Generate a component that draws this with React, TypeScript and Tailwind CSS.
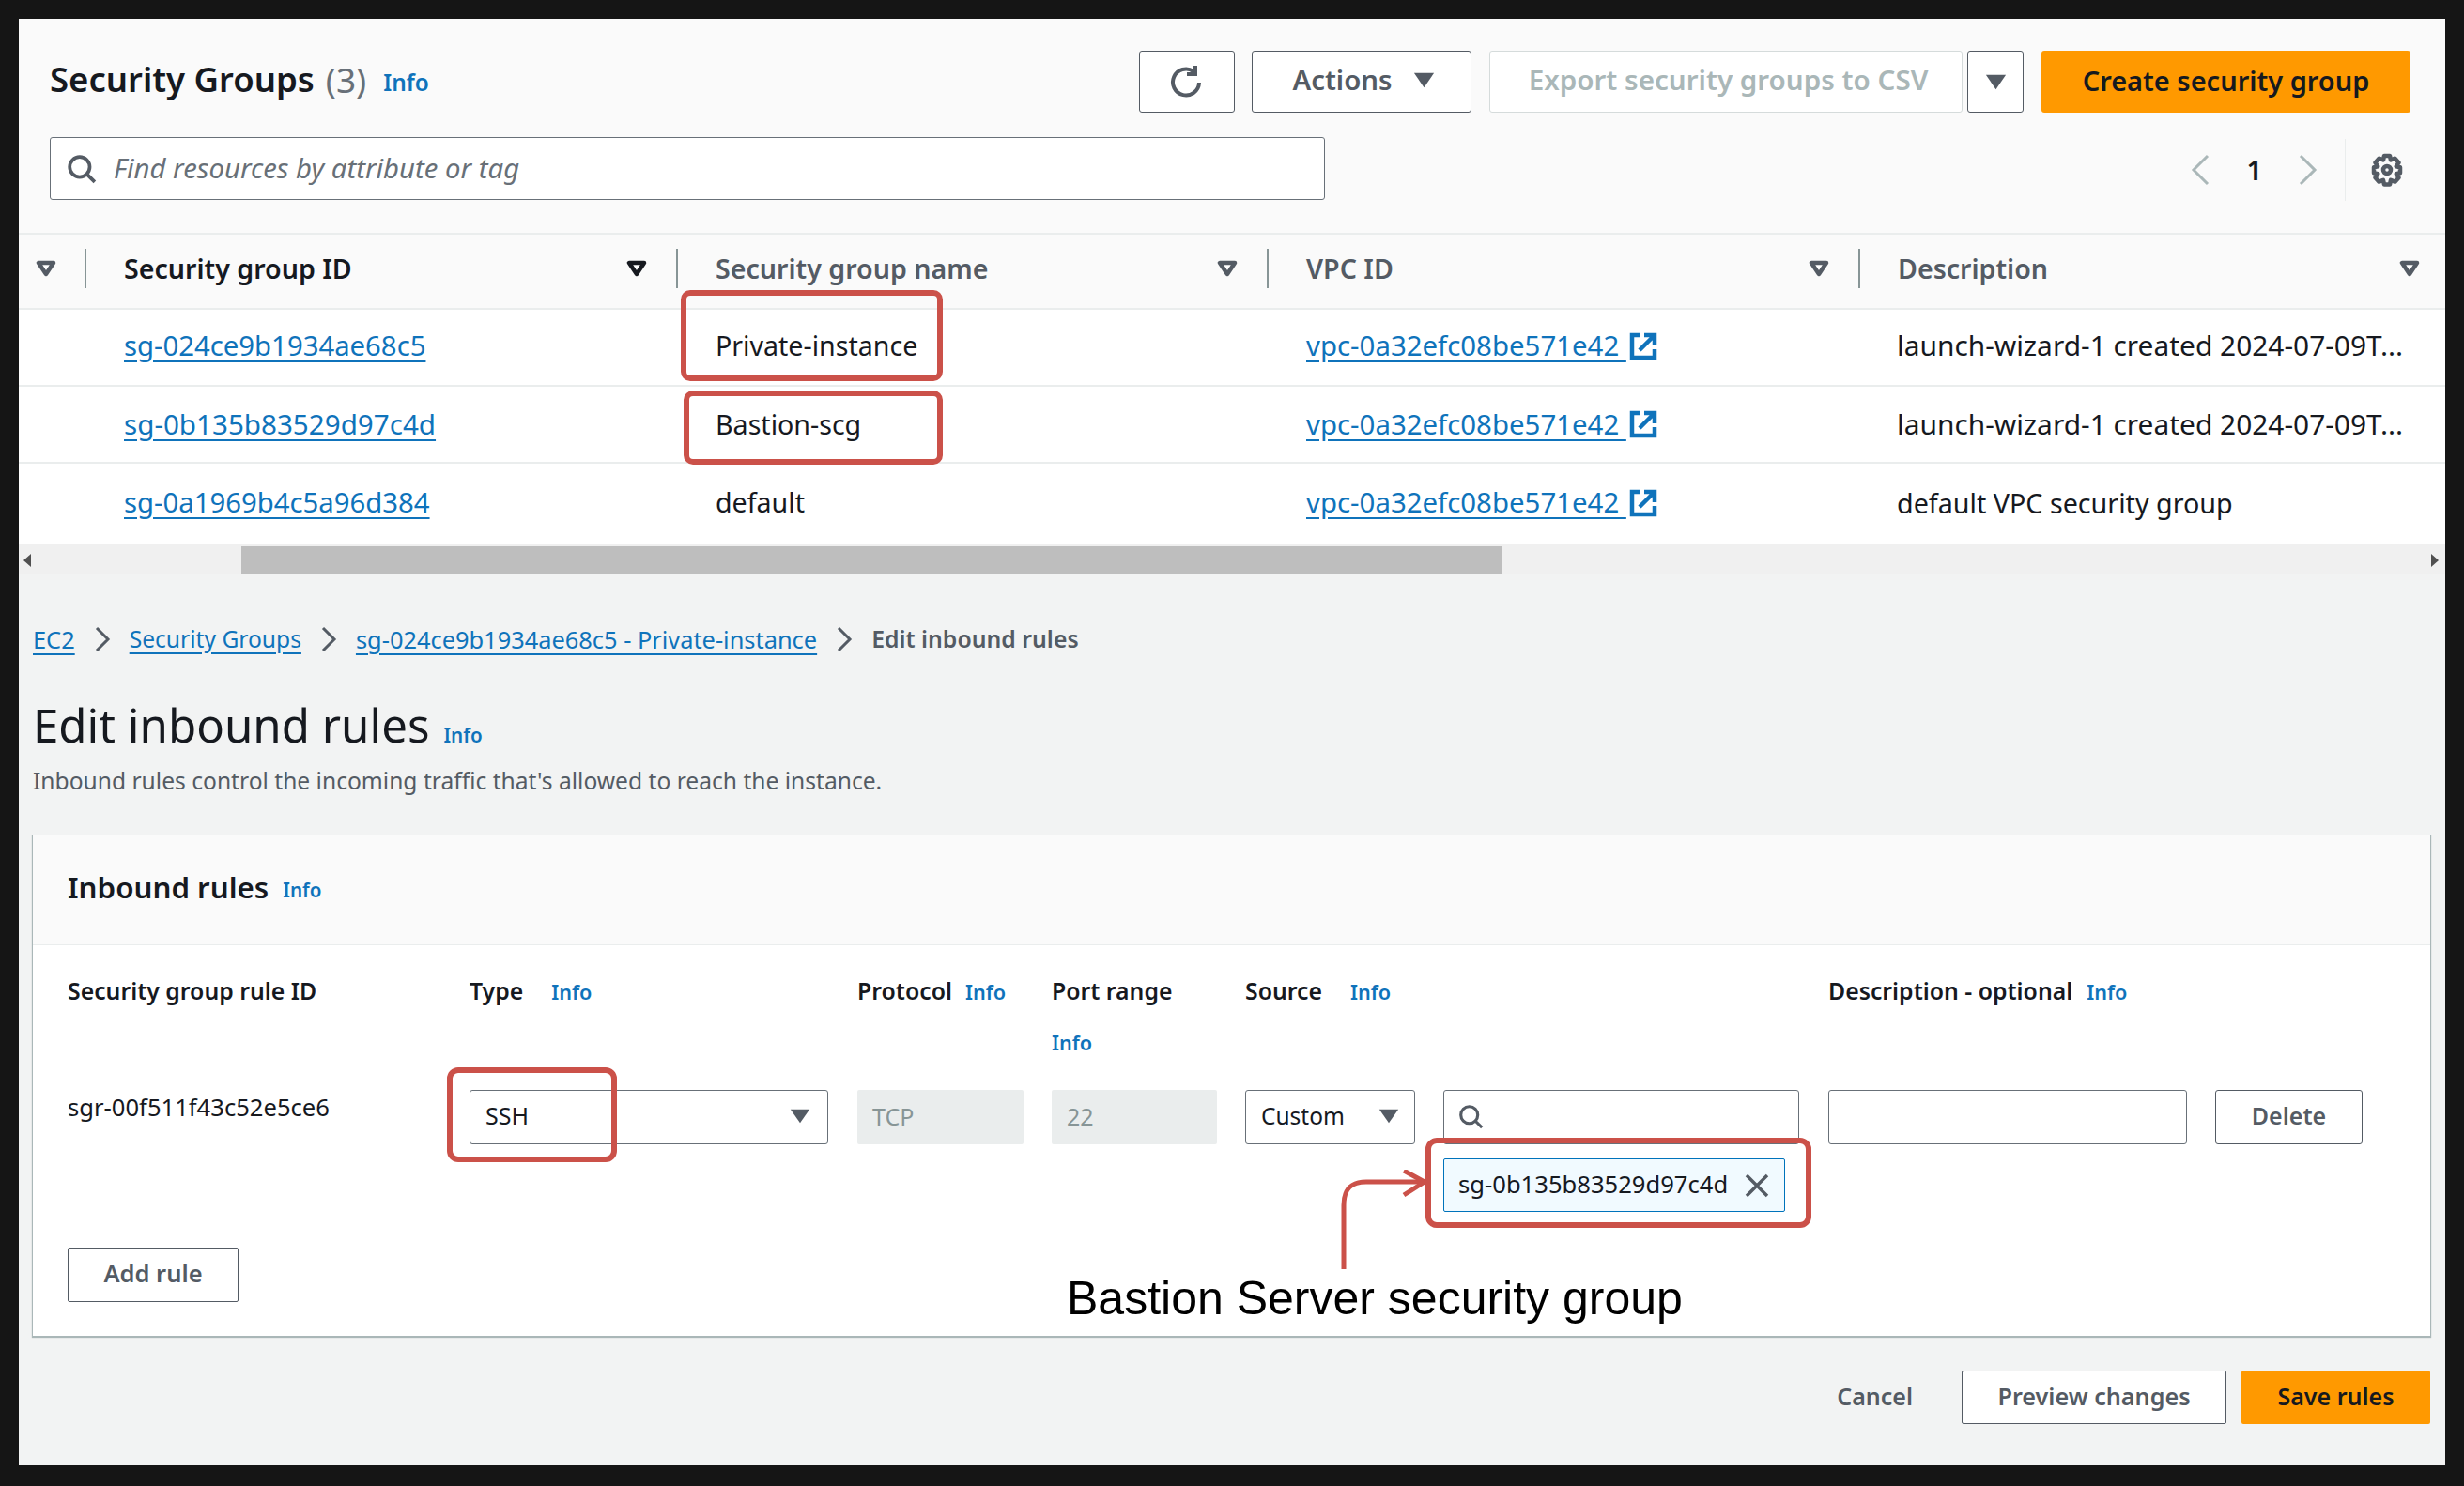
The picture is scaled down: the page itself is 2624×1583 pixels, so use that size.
import React from 'react';

const font = { fontFamily: '"Noto Sans", sans-serif' };

const Caret = ({ className = 'w-[23px] h-[17px] text-[#545b64]' }: { className?: string }) => (
  <svg viewBox="0 0 26 20" preserveAspectRatio="none" className={className}>
    <path d="M1 1h24L13 19z" fill="currentColor" />
  </svg>
);

const FilterIcon = ({ dark }: { dark?: boolean }) => (
  <svg viewBox="0 0 22 18" className="w-[22px] h-[18px]">
    <path d="M3 3h16L11 15z" fill="#fff" stroke={dark ? '#16191f' : '#545b64'} strokeWidth="4.5" strokeLinejoin="round" />
  </svg>
);

const SearchIcon = ({ className }: { className?: string }) => (
  <svg viewBox="0 0 30 30" fill="none" stroke="#545b64" strokeWidth="3.5" className={className}>
    <circle cx="13" cy="13" r="10" />
    <path d="M20 20l8 8" />
  </svg>
);

const ExternalIcon = () => (
  <svg viewBox="0 0 30 30" fill="none" stroke="#0f73bb" strokeWidth="4.5" className="w-[30px] h-[30px] shrink-0">
    <path d="M12 3H3v24h24v-9" />
    <path d="M16 3h11v11M26 4L11 19" />
  </svg>
);

const Chevron = () => (
  <svg viewBox="0 0 20 28" fill="none" stroke="#545b64" strokeWidth="3" className="w-[20px] h-[28px] shrink-0">
    <path d="M4 2l12 12L4 26" />
  </svg>
);

const Info = ({ className }: { className: string }) => (
  <span className={`font-semibold text-[#0f73bb] ${className}`}>Info</span>
);

const Link = ({ children }: { children: React.ReactNode }) => (
  <span className="text-[#0f73bb] underline underline-offset-[5px] whitespace-pre">{children}</span>
);

const rows = [
  { id: 'sg-024ce9b1934ae68c5', idSize: 'text-[29.3px]', name: 'Private-instance', desc: 'launch-wizard-1 created 2024-07-09T...', descSize: 'text-[29.9px]', h: 'h-[82px] pb-[3px]' },
  { id: 'sg-0b135b83529d97c4d', idSize: 'text-[29.6px]', name: 'Bastion-scg', desc: 'launch-wizard-1 created 2024-07-09T...', descSize: 'text-[29.9px]', h: 'h-[82px]' },
  { id: 'sg-0a1969b4c5a96d384', idSize: 'text-[29.3px]', name: 'default', desc: 'default VPC security group', descSize: 'text-[28.7px]', h: 'h-[85px] pb-[2px]' },
];

const headers = ['Security group ID', 'Security group name', 'VPC ID', 'Description'];

const Field = ({ className, children }: { className: string; children?: React.ReactNode }) => (
  <div className={`h-[58px] rounded-[3px] border border-[#687078] bg-white flex items-center pb-[2px] ${className}`}>
    {children}
  </div>
);

const Label = ({ children }: { children: React.ReactNode }) => (
  <span className="text-[24.8px] font-semibold text-[#16191f]">{children}</span>
);

const Annotations = () => (
  <>
    <div className="absolute left-[725px] top-[309px] w-[279px] h-[97px] rounded-[10px] border-[6px] border-[#cb5149]" />
    <div className="absolute left-[728px] top-[416px] w-[276px] h-[79px] rounded-[10px] border-[6px] border-[#cb5149]" />
    <div className="absolute left-[476px] top-[1137px] w-[181px] h-[101px] rounded-[12px] border-[6px] border-[#cb5149]" />
    <div className="absolute left-[1518px] top-[1212px] w-[411px] h-[96px] rounded-[12px] border-[6px] border-[#cb5149]" />
    <svg viewBox="0 0 100 110" fill="none" stroke="#cb5149" strokeWidth="5" className="absolute left-[1425px] top-[1246px] w-[100px] h-[110px]">
      <path d="M6 106V38C6 20 14 13 30 13H90" />
      <path d="M70 1l22 12-22 14" strokeLinejoin="round" />
    </svg>
    <div className="absolute left-[1136px] top-[1346px] text-[50px] leading-[74px] text-black whitespace-nowrap" style={{ fontFamily: '"Liberation Sans", sans-serif' }}>
      Bastion Server security group
    </div>
  </>
);

export default function App() {
  return (
    <div className="relative w-[2624px] h-[1583px] bg-[#151515] pl-[20px] pr-[20px] pt-[20px] pb-[22px] overflow-hidden" style={font}>
      <div className="h-full flex flex-col bg-[#f2f3f3]">
        {/* Security groups table */}
        <div className="bg-[#fafafa]">
          <div className="flex items-center h-[128px] pl-[33px] pr-[37px] pt-[6px]">
            <div className="flex items-center -mt-[5px]">
              <span className="text-[36.5px] font-semibold text-[#16191f]">Security Groups</span>
              <span className="text-[37px] text-[#687078] ml-[12px]">(3)</span>
              <Info className="text-[24.4px] ml-[18px] mt-[7px]" />
            </div>
            <div className="ml-auto flex items-center h-[66px]">
              <button className="w-[102px] h-full rounded-[3px] border border-[#545b64] bg-white flex items-center justify-center">
                <svg viewBox="0 0 40 40" fill="none" stroke="#545b64" strokeWidth="4" className="w-[40px] h-[40px]">
                  <path d="M33 21a14 14 0 1 1-6-12" />
                  <path d="M29 3v9h-9" />
                </svg>
              </button>
              <button className="ml-[18px] w-[234px] h-full rounded-[3px] border border-[#545b64] bg-white flex items-center justify-center gap-[22px] pl-[4px] pb-[3px] text-[29.4px] font-semibold text-[#545b64]">
                Actions <Caret />
              </button>
              <button className="ml-[19px] w-[504px] h-full rounded-[3px] border border-[#d5dbdb] bg-white pl-[5px] pb-[3px] text-[29.6px] font-semibold text-[#aab7b8]">
                Export security groups to CSV
              </button>
              <button className="ml-[5px] w-[60px] h-full rounded-[3px] border border-[#545b64] bg-white flex items-center justify-center">
                <Caret />
              </button>
              <button className="ml-[19px] w-[393px] h-full rounded-[3px] bg-[#ff9900] pb-[3px] text-[29px] font-semibold text-[#16191f]">
                Create security group
              </button>
            </div>
          </div>
          <div className="flex items-start h-[100px] pl-[33px] pr-[44px]">
            <div className="w-[1358px] h-[67px] -mt-[2px] rounded-[3px] border border-[#687078] bg-white flex items-center pl-[17px]">
              <SearchIcon className="w-[32px] h-[32px]" />
              <span className="ml-[18px] text-[29.3px] italic text-[#687078]">Find resources by attribute or tag</span>
            </div>
            <div className="ml-auto flex items-center h-[66px] text-[#aab7b8]">
              <svg viewBox="0 0 22 34" fill="none" stroke="#aab7b8" strokeWidth="3" className="w-[22px] h-[34px]">
                <path d="M19 2L4 17l15 15" />
              </svg>
              <span className="mx-[38px] text-[29px] font-semibold text-[#16191f]">1</span>
              <svg viewBox="0 0 22 34" fill="none" stroke="#aab7b8" strokeWidth="3" className="w-[22px] h-[34px]">
                <path d="M3 2l15 15L3 32" />
              </svg>
              <div className="ml-[28px] h-[66px] border-l border-[#eaeded]" />
              <svg viewBox="0 0 36 36" fill="none" stroke="#545b64" strokeWidth="4.5" className="ml-[26px] w-[36px] h-[36px]">
                <circle cx="18" cy="18" r="4" />
                <path d="M15 3h6l1 4.500 4.500-1.800 4 4.500-2.700 4 4.200 1v6l-4.200 1 2.700 4-4 4.500-4.500-1.800-1 4.600h-6l-1-4.600-4.500 1.800-4-4.500 2.700-4-4.200-1v-6l4.200-1-2.700-4 4-4.500 4.500 1.800z" strokeLinejoin="round" />
              </svg>
            </div>
          </div>
        </div>

        <div className="grid grid-cols-[70px_630px_629px_630px_1fr] border-t-2 border-[#eaeded]">
          {/* header row */}
          <div className="h-[80px] bg-[#fafafa] border-b-2 border-[#eaeded] flex items-center pl-[18px] pb-[6px]">
            <FilterIcon />
          </div>
          {headers.map((h, i) => (
            <div key={h} className="h-[80px] bg-[#fafafa] border-b-2 border-[#eaeded] flex items-center pb-[6px]">
              <div className={`h-[42px] w-full flex items-center pl-[40px] border-l-2 border-[#879596] ${i === 3 ? 'pr-[27px]' : 'pr-[31px]'}`}>
                <span className={`text-[28.6px] font-semibold ${i === 0 ? 'text-[#16191f]' : 'text-[#545b64]'}`}>{h}</span>
                <span className="ml-auto">
                  <FilterIcon dark={i === 0} />
                </span>
              </div>
            </div>
          ))}
          {/* data rows */}
          {rows.map((r, i) => {
            const cell = `${r.h} bg-white flex items-center ${i < 2 ? 'border-b-2 border-[#eaeded]' : ''}`;
            return (
              <React.Fragment key={r.id}>
                <div className={cell} />
                <div className={`${cell} pl-[42px] ${r.idSize}`}>
                  <Link>{r.id}</Link>
                </div>
                <div className={`${cell} pl-[42px] text-[28.6px] text-[#16191f]`}>{r.name}</div>
                <div className={`${cell} gap-[3px] pl-[42px] text-[29.4px]`}>
                  <Link>{'vpc-0a32efc08be571e42 '}</Link>
                  <ExternalIcon />
                </div>
                <div className={`${cell} pl-[41px] ${r.descSize} text-[#16191f] whitespace-nowrap`}>{r.desc}</div>
              </React.Fragment>
            );
          })}
        </div>

        {/* scrollbar */}
        <div className="h-[32px] bg-[#f0f0f0] flex items-stretch pt-[3px]">
          <div className="w-[237px] flex items-center pl-[5px]">
            <div className="w-0 h-0 border-y-[7px] border-y-transparent border-r-[8px] border-r-[#505050]" />
          </div>
          <div className="w-[1343px] bg-[#bebebe]" />
          <div className="flex-1 flex items-center justify-end pr-[7px]">
            <div className="w-0 h-0 border-y-[7px] border-y-transparent border-l-[8px] border-l-[#505050]" />
          </div>
        </div>

        {/* Edit inbound rules */}
        <div className="flex-1 flex flex-col pl-[15px] pr-[16px]">
          <div className="mt-[50px] h-[40px] flex items-center text-[25.4px]">
            <Link>EC2</Link>
            <span className="mx-[19px]"><Chevron /></span>
            <span className="text-[24.6px]"><Link>Security Groups</Link></span>
            <span className="mx-[19px]"><Chevron /></span>
            <Link>sg-024ce9b1934ae68c5 - Private-instance</Link>
            <span className="mx-[19px]"><Chevron /></span>
            <span className="text-[24.8px] font-semibold text-[#545b64]">Edit inbound rules</span>
          </div>
          <div className="mt-[36px] flex items-baseline h-[70px]">
            <span className="text-[49.2px] leading-[70px] text-[#16191f]">Edit inbound rules</span>
            <Info className="text-[20.6px] ml-[15px]" />
          </div>
          <div className="mt-[7px] text-[24.6px] leading-[36px] text-[#545b64]">
            Inbound rules control the incoming traffic that's allowed to reach the instance.
          </div>
          {/* card */}
          <div className="mt-[40px] h-[533px] bg-white shadow-[0_1px_1px_1px_#aab7b8]">
            <div className="h-[117px] bg-[#fafafa] border-b border-[#eaeded] flex items-center pl-[37px] pb-[6px]">
              <span className="text-[31.3px] font-semibold text-[#16191f]">Inbound rules</span>
              <Info className="text-[20.6px] ml-[15px] mt-[6px]" />
            </div>
            <div className="pl-[37px] pt-[30px]">
              <div className="grid grid-cols-[428px_413px_207px_206px_621px_412px_auto]">
                <div className="h-[124px]"><Label>Security group rule ID</Label></div>
                <div className="flex gap-[30px] items-baseline h-[124px]"><Label>Type</Label><Info className="text-[21.6px]" /></div>
                <div className="flex gap-[14px] items-baseline h-[124px]"><Label>Protocol</Label><Info className="text-[21.6px]" /></div>
                <div className="h-[124px]">
                  <Label>Port range</Label>
                  <div className="mt-[21px]"><Info className="text-[21.6px]" /></div>
                </div>
                <div className="flex gap-[30px] items-baseline h-[124px]"><Label>Source</Label><Info className="text-[21.6px]" /></div>
                <div className="flex gap-[15px] items-baseline h-[124px] col-span-2"><Label>Description - optional</Label><Info className="text-[21.6px]" /></div>

                <div className="text-[25.6px] text-[#16191f]">sgr-00f511f43c52e5ce6</div>
                <div>
                  <Field className="w-[382px] pl-[16px] pr-[18px] text-[25px] text-[#16191f]">
                    SSH
                    <span className="ml-auto"><Caret className="w-[22px] h-[16px] text-[#545b64]" /></span>
                  </Field>
                </div>
                <div>
                  <div className="w-[177px] h-[58px] rounded-[2px] bg-[#eaeded] flex items-center pl-[16px] text-[25px] text-[#879596]">TCP</div>
                </div>
                <div>
                  <div className="w-[176px] h-[58px] rounded-[2px] bg-[#eaeded] flex items-center pl-[16px] text-[25px] text-[#879596]">22</div>
                </div>
                <div className="flex flex-col">
                  <div className="flex gap-[30px]">
                    <Field className="w-[181px] pl-[16px] pr-[16px] text-[24.5px] text-[#16191f]">
                      Custom
                      <span className="ml-auto"><Caret className="w-[22px] h-[16px] text-[#545b64]" /></span>
                    </Field>
                    <Field className="w-[379px] pl-[15px]">
                      <SearchIcon className="w-[27px] h-[27px]" />
                    </Field>
                  </div>
                  <div className="ml-[211px] mt-[15px] w-[364px] h-[57px] rounded-[2px] border border-[#0073bb] bg-[#f1faff] flex items-center pl-[15px] pr-[16px] text-[25.6px] text-[#16191f]">
                    sg-0b135b83529d97c4d
                    <svg viewBox="0 0 26 26" fill="none" stroke="#545b64" strokeWidth="3.5" className="ml-auto w-[26px] h-[26px]">
                      <path d="M2 2l22 22M24 2L2 24" />
                    </svg>
                  </div>
                </div>
                <div>
                  <Field className="w-[382px]" />
                </div>
                <div>
                  <button className="w-[157px] h-[58px] rounded-[3px] border border-[#545b64] bg-white pb-[2px] text-[25px] font-semibold text-[#545b64]">Delete</button>
                </div>
              </div>
              <button className="mt-[38px] w-[182px] h-[58px] rounded-[2px] border border-[#545b64] bg-white pb-[3px] text-[25.5px] font-semibold text-[#545b64]">
                Add rule
              </button>
            </div>
          </div>
          {/* footer */}
          <div className="mt-[37px] flex items-center justify-end">
            <span className="text-[25px] font-semibold text-[#545b64] mr-[52px] -mt-[2px]">Cancel</span>
            <button className="w-[282px] h-[57px] rounded-[2px] border border-[#545b64] bg-white pb-[2px] text-[25.2px] font-semibold text-[#545b64]">Preview changes</button>
            <button className="ml-[16px] w-[201px] h-[57px] rounded-[2px] bg-[#ff9900] pb-[1px] text-[25px] font-semibold text-[#16191f]">Save rules</button>
          </div>
        </div>
      </div>
      <Annotations />
    </div>
  );
}
